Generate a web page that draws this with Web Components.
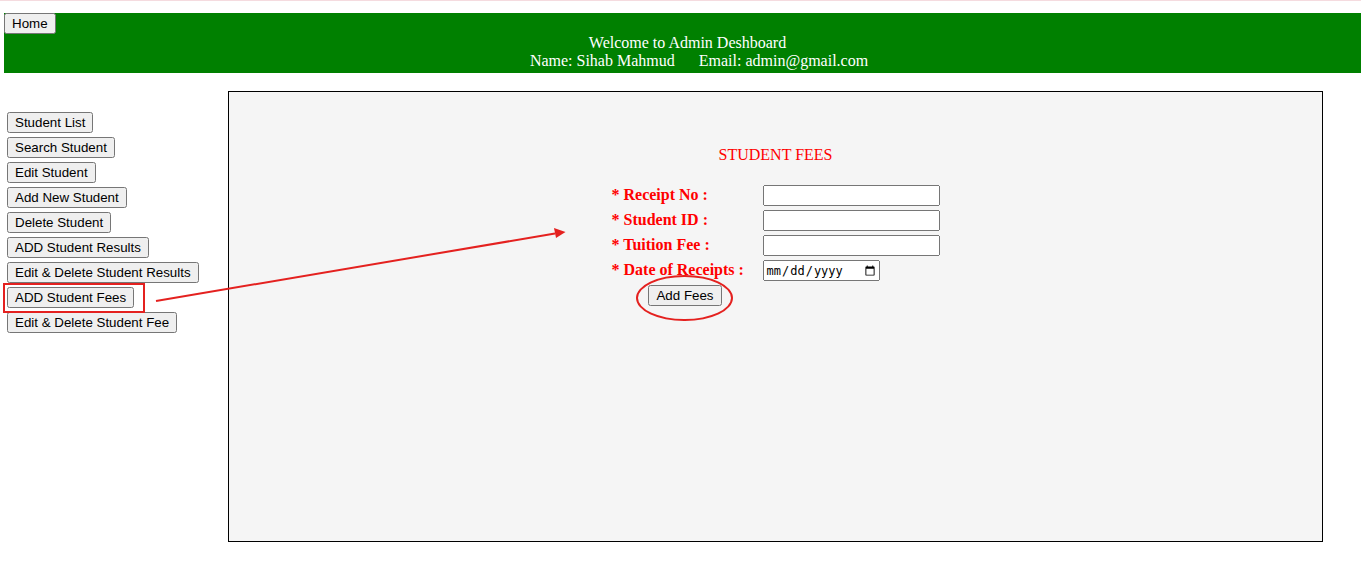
<!DOCTYPE html>
<html lang="en">
<head>
<meta charset="utf-8">
<title>Admin Deshboard</title>
<style>
body { margin: 0; background: #fff; font: 16px/18px "Liberation Serif", "Times New Roman", serif; }
</style>
</head>
<body>
<admin-page>
  <admin-header slot="header">
    <span slot="title">Welcome to Admin Deshboard</span>
    <span slot="name">Name: Sihab Mahmud</span>
    <span slot="email">Email: admin@gmail.com</span>
  </admin-header>
  <admin-menu slot="menu">
    <menu-button>Student List</menu-button>
    <menu-button>Search Student</menu-button>
    <menu-button>Edit Student</menu-button>
    <menu-button>Add New Student</menu-button>
    <menu-button>Delete Student</menu-button>
    <menu-button>ADD Student Results</menu-button>
    <menu-button>Edit &amp; Delete Student Results</menu-button>
    <menu-button marked>ADD Student Fees</menu-button>
    <menu-button>Edit &amp; Delete Student Fee</menu-button>
  </admin-menu>
  <fees-form>STUDENT FEES</fees-form>
</admin-page>
<script>
const define = (name, html) => customElements.define(name, class extends HTMLElement {
  constructor() {
    super();
    this.attachShadow({ mode: 'open' }).innerHTML = html;
  }
});

const buttonStyle = `button { display: block; height: 21px; font-family: "Liberation Sans", Arial, sans-serif; white-space: nowrap; }`;

define('admin-page', `
<style>
:host { display: block; border-top: 1px solid #f5dbdf; padding: 12px 0 36px 4px; }
main { display: flex; margin-top: 18px; }
.menu { flex: none; width: 224px; }
.content { flex: 1; margin-right: 38px; display: grid; }
</style>
<slot name="header"></slot>
<main>
  <div class="menu"><slot name="menu"></slot></div>
  <div class="content"><slot></slot></div>
</main>`);

define('admin-header', `
<style>
:host { display: block; background: #008000; color: #fff; padding-bottom: 3px; }
${buttonStyle}
.title, .user { text-align: center; padding-left: 10px; }
.user { display: flex; justify-content: center; gap: 24px; padding-left: 33px; }
</style>
<button type="button">Home</button>
<div class="title"><slot name="title"></slot></div>
<div class="user"><slot name="name"></slot><slot name="email"></slot></div>`);

define('admin-menu', `
<style>
:host { display: block; }
nav { display: flex; flex-direction: column; align-items: flex-start; gap: 4px; padding: 21px 0 0 3px; }
</style>
<nav><slot></slot></nav>`);

define('menu-button', `
<style>
:host { display: block; position: relative; }
:host([marked]) { z-index: 1; }
${buttonStyle}
.mark, .arrow { display: none; pointer-events: none; }
:host([marked]) .mark { display: block; position: absolute; inset: -4px -11px -5px -4px; border: 2px solid #e4211f; }
:host([marked]) .arrow { display: block; position: absolute; left: 148px; top: -60px; }
</style>
<button type="button"><slot></slot></button>
<span class="mark"></span>
<svg class="arrow" width="412" height="76" viewBox="0 0 412 76" aria-hidden="true">
  <path d="M1 74 400 6.500" stroke="#e4211f" stroke-width="2" fill="none"/>
  <path d="M399 1 410.500 5 401 11Z" fill="#e4211f"/>
</svg>`);

define('fees-form', `
<style>
:host { display: block; box-sizing: border-box; min-height: 451px; border: 1px solid #000; background: #f5f5f5; color: #f00; padding-top: 54px; }
h1 { margin: 0; font-size: 16px; font-weight: 400; text-align: center; }
form { display: grid; grid-template-columns: 147px 177px; column-gap: 4px; row-gap: 4px; justify-content: center; margin-top: 21px; }
label { font-weight: 700; line-height: 20px; white-space: nowrap; }
input { box-sizing: border-box; width: 177px; height: 21px; margin: 0; }
input[type=date] { width: 117px; font-family: "DejaVu Sans Mono", monospace; font-size: 12px; }
${buttonStyle}
.action { position: relative; justify-self: center; }
.ring { position: absolute; inset: -10px -11px -15px -12px; border: 2px solid #e4211f; border-radius: 50%; pointer-events: none; }
</style>
<h1><slot></slot></h1>
<form>
  <label for="receipt">* Receipt No :</label><input id="receipt" type="text">
  <label for="student">* Student ID :</label><input id="student" type="text">
  <label for="tuition">* Tuition Fee :</label><input id="tuition" type="text">
  <label for="date">* Date of Receipts :</label><input id="date" type="date">
  <div class="action"><button type="button">Add Fees</button><span class="ring"></span></div>
</form>`);
</script>
</body>
</html>
